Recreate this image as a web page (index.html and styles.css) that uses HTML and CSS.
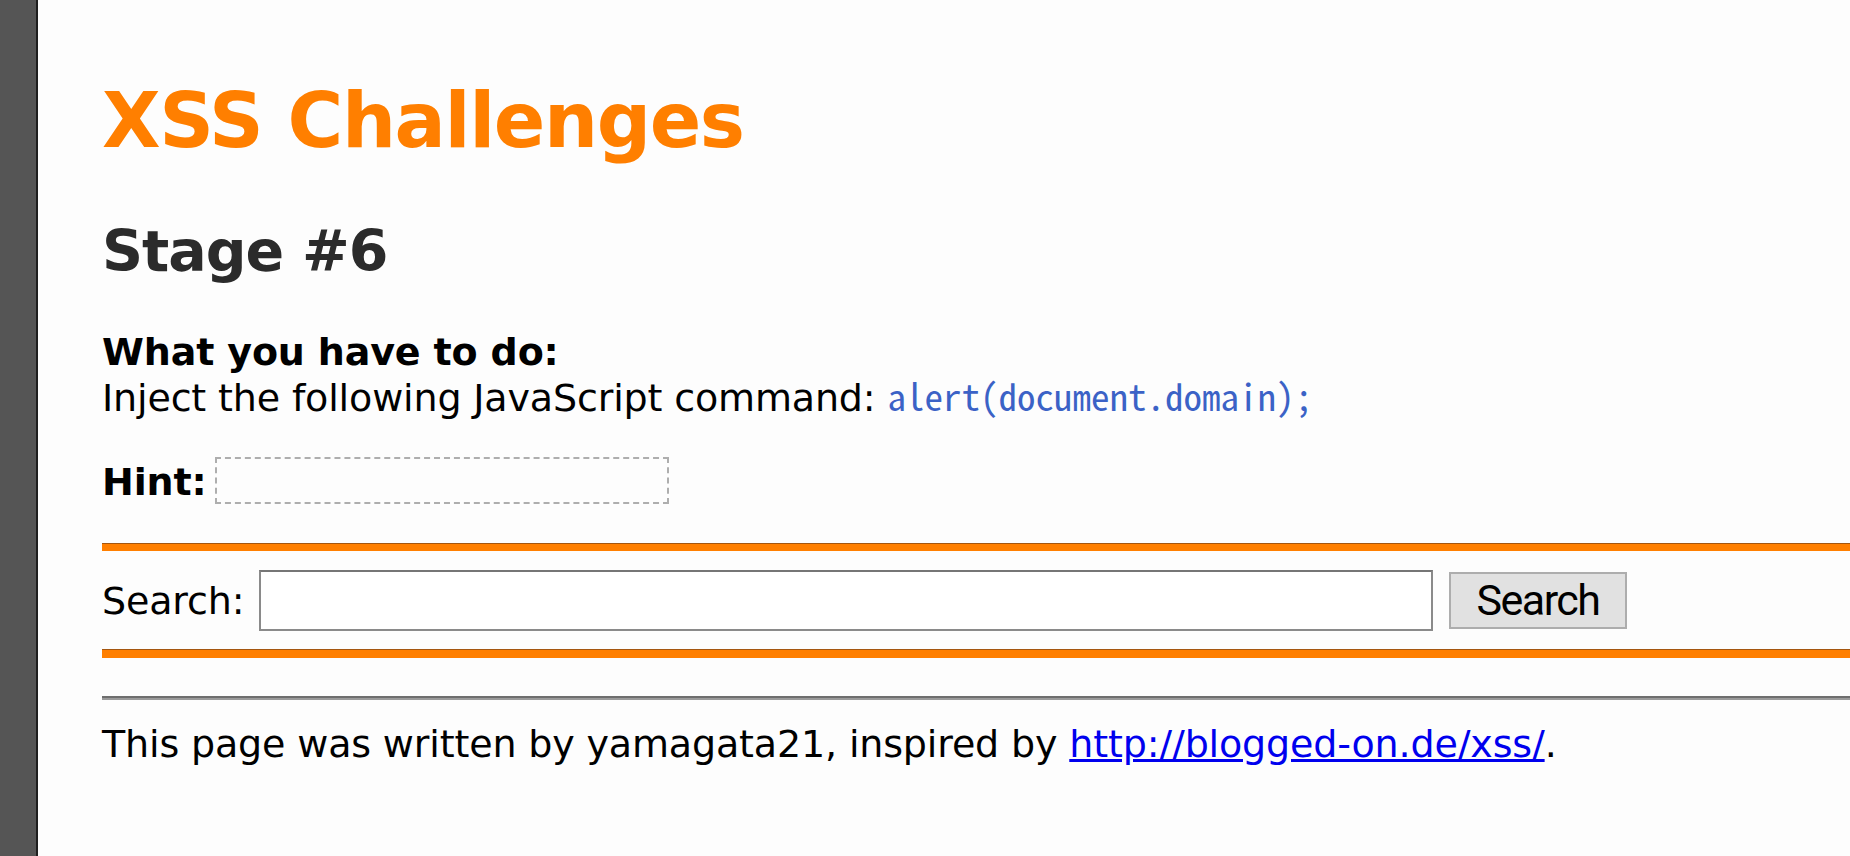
FILE: index.html
```html
<!DOCTYPE html>
<html lang="en">
<head>
<meta charset="utf-8">
<title>XSS Challenges (by yamagata21) - Stage #6</title>
<link rel="stylesheet" href="styles.css">
</head>
<body>
<div class="frame">
  <div class="side-bar"></div>
  <main class="page">
    <h1 class="title">XSS Challenges</h1>
    <h2 class="stage">Stage #6</h2>
    <p class="task"><b>What you have to do:</b><br>Inject the following JavaScript command: <code class="cmd">alert(document.domain);</code></p>
    <p class="hint"><b>Hint:</b> <span class="hint-box"></span></p>
    <div class="rule-orange"></div>
    <form class="search-row" onsubmit="return false;">
      <label class="search-label" for="p1">Search:</label>
      <input class="search-input" id="p1" type="text" name="p1">
      <button class="search-btn" type="submit">Search</button>
    </form>
    <div class="rule-orange rule-orange-2"></div>
    <div class="rule-gray"></div>
    <p class="footer">This page was written by yamagata21, inspired by <a class="link" href="#">http://blogged-on.de/xss/</a>.</p>
  </main>
</div>
</body>
</html>
```

FILE: styles.css
```css
html, body {
  margin: 0;
  padding: 0;
  background: #fdfdfd;
}

body {
  font-family: "DejaVu Sans", Verdana, sans-serif;
  font-size: 38px;
  line-height: 46px;
  letter-spacing: -0.15px;
  color: #000;
}

.frame {
  display: flex;
  min-height: 856px;
}

.side-bar {
  flex: 0 0 36px;
  background: #555555;
  border-right: 2px solid #1f1f1f;
}

.page {
  flex: 1 1 auto;
  padding: 77px 0 0 64px;
  min-width: 0;
}

.title {
  margin: 0 0 53px;
  font-size: 76px;
  line-height: 88px;
  font-weight: bold;
  letter-spacing: -1.4px;
  color: #ff7f00;
}

.stage {
  margin: 0 0 45px;
  font-size: 57px;
  line-height: 66px;
  font-weight: bold;
  letter-spacing: -1px;
  color: #2b2b2b;
}

.task {
  margin: 0 0 36px;
}

.cmd {
  font-family: "Noto Sans Mono CJK SC", "Liberation Mono", monospace;
  font-size: 37px;
  line-height: 1;
  letter-spacing: 0;
  color: #3b62c6;
}

.hint {
  margin: 0 0 38px;
}

.hint-box {
  display: inline-block;
  width: 450px;
  height: 43px;
  border: 2px dashed #aeaeae;
  vertical-align: -9px;
  margin-left: -3px;
}

.rule-orange {
  height: 7px;
  background: #ff7f00;
  border-top: 1px solid #a4560f;
}

.rule-orange-2 {
  height: 8px;
}

.search-row {
  display: flex;
  align-items: center;
  margin: 19px 0 18px;
  height: 61px;
}

.search-label {
  width: 157px;
  flex: 0 0 157px;
}

.search-input {
  box-sizing: border-box;
  width: 1174px;
  height: 61px;
  margin: 0;
  border: 2px solid #8a8a8a;
  border-top-color: #767676;
  background: #fff;
  font-size: 38px;
  padding: 0 6px;
}

.search-btn {
  box-sizing: border-box;
  margin: 0 0 0 16px;
  width: 178px;
  height: 57px;
  background: #e1e1e1;
  border: 2px solid #adadad;
  border-radius: 0;
  font-family: Roboto, "Noto Sans", sans-serif;
  font-size: 43px;
  letter-spacing: -1.5px;
  color: #000;
  padding: 0;
  line-height: 1;
}

.rule-gray {
  margin-top: 38px;
  height: 2px;
  background: #6e6e6e;
  border-bottom: 2px solid #9a9a9a;
}

.footer {
  margin: 21px 0 0;
}

.link {
  color: #0000ee;
  text-decoration: underline;
}
```
